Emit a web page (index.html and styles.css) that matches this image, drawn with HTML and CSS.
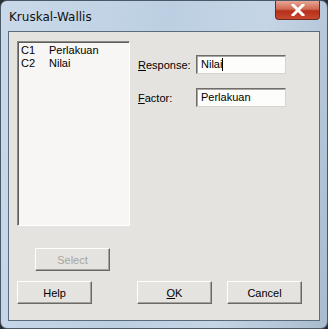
FILE: index.html
```html
<!DOCTYPE html>
<html lang="en">

<head>
    <meta charset="UTF-8">
    <title>Kruskal-Wallis</title>
    <link rel="stylesheet" href="styles.css">
</head>

<body>
    <div class="window">
        <!-- title bar -->
        <div class="titlebar">
            <span class="title">Kruskal-Wallis</span>
            <div class="close">
                <svg width="14" height="12" viewBox="0 0 14 12">
                    <path d="M2 1 L12 11 M12 1 L2 11" stroke="#fff" stroke-width="3" stroke-linecap="square"/>
                </svg>
            </div>
        </div>
        <!-- dialog body -->
        <div class="client">
            <div class="top">
                <div class="left">
                    <div class="listbox">
                        <div class="row"><span class="col">C1</span><span>Perlakuan</span></div>
                        <div class="row"><span class="col">C2</span><span>Nilai</span></div>
                    </div>
                    <button class="btn select" disabled>Select</button>
                </div>
                <div class="fields">
                    <div class="field">
                        <label><u>R</u>esponse:</label>
                        <div class="input">Nilai<span class="caret"></span></div>
                    </div>
                    <div class="field">
                        <label><u>F</u>actor:</label>
                        <div class="input">Perlakuan</div>
                    </div>
                </div>
            </div>
            <div class="buttons">
                <button class="btn">Help</button>
                <button class="btn"><u>O</u>K</button>
                <button class="btn">Cancel</button>
            </div>
        </div>
    </div>
</body>

</html>
```

FILE: styles.css
```css
body {
    margin: 0;
    background-color: #2a2f35;
    font-family: 'Liberation Sans', Arial, sans-serif;
    font-size: 11px;
    color: #000;
}

.window {
    width: 328px;
    height: 329px;
    box-sizing: border-box;
    border-radius: 7px;
    border: 1px solid #4a5868;
    background: linear-gradient(100deg, #c9d9ea 0%, #bccfe2 45%, #c5d5e6 70%, #a9bccf 100%);
    display: flex;
    flex-direction: column;
}

.titlebar {
    height: 30px;
    display: flex;
    justify-content: space-between;
    align-items: flex-start;
}

.title {
    font-family: 'DejaVu Sans', sans-serif;
    font-size: 12px;
    margin: 9px 0 0 8px;
    color: #111;
}

.close {
    width: 45px;
    height: 19px;
    margin-right: 7px;
    border: 1px solid #6b2a20;
    border-top: none;
    border-radius: 0 0 4px 4px;
    background: linear-gradient(#e6a796 0%, #d06a52 45%, #b5301a 55%, #c8492e 100%);
    display: flex;
    justify-content: center;
    align-items: center;
    box-sizing: border-box;
}

.client {
    margin: 0 7px 7px 7px;
    flex: 1;
    border: 1px solid #5c6b7c;
    background-color: #e5e3df;
    display: flex;
    flex-direction: column;
    padding: 9px 17px 16px 8px;
}

.top {
    display: flex;
    flex: 1;
}

.left {
    width: 113px;
    display: flex;
    flex-direction: column;
}

.listbox {
    height: 185px;
    box-sizing: border-box;
    background-color: #f7f6f4;
    border: 1px solid #8a8884;
    border-right-color: #fff;
    border-bottom-color: #fff;
    box-shadow: inset 1px 1px 0 #5e5d5b;
    padding: 2px 3px;
}

.row {
    display: flex;
    height: 13px;
    line-height: 13px;
}

.col {
    width: 28px;
}

.btn {
    width: 75px;
    height: 23px;
    box-sizing: border-box;
    font-family: 'Liberation Sans', Arial, sans-serif;
    font-size: 11px;
    background-color: #e5e3df;
    border: 1px solid #fff;
    border-right-color: #6a6966;
    border-bottom-color: #6a6966;
    box-shadow: inset -1px -1px 0 #a3a19d;
    padding: 0;
    color: #000;
}

.btn u {
    text-decoration: underline;
}

.select {
    margin: 22px 0 0 18px;
    color: #a8a6a2;
}

.fields {
    margin-left: 8px;
    padding-top: 14px;
}

.field {
    display: flex;
    align-items: center;
    margin-bottom: 14px;
}

.field label {
    width: 58px;
}

.input {
    width: 90px;
    height: 19px;
    box-sizing: border-box;
    background-color: #fdfdfc;
    border: 1px solid #d6d4d0;
    border-top-color: #6f6e6b;
    border-left-color: #6f6e6b;
    box-shadow: inset 1px 1px 0 #a7a5a1;
    padding: 2px 0 0 4px;
    display: flex;
}

.caret {
    width: 1px;
    height: 13px;
    background-color: #000;
}

.buttons {
    display: flex;
    gap: 0;
}

.buttons .btn:nth-child(2) {
    margin-left: 45px;
}

.buttons .btn:nth-child(3) {
    margin-left: 15px;
}
```
